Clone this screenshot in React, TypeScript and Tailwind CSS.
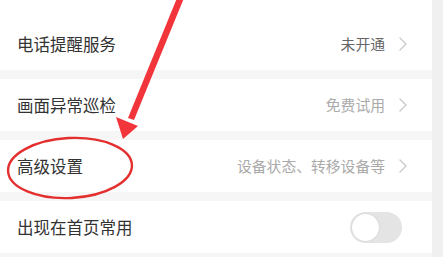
import { ChevronRight } from "lucide-react";

type Row = { title: string; value?: string; dark?: boolean; toggle?: boolean };

const rows: Row[] = [
  { title: "电话提醒服务", value: "未开通", dark: true },
  { title: "画面异常巡检", value: "免费试用" },
  { title: "高级设置", value: "设备状态、转移设备等" },
  { title: "出现在首页常用", toggle: true },
];

export default function App() {
  return (
    <div
      className="relative w-[443px] h-[257px] overflow-hidden bg-[#f0f0f0] flex"
      style={{ fontFamily: '"Noto Sans CJK SC", "Noto Sans", sans-serif' }}
    >
      <div className="w-[432px] h-full bg-[#f6f6f6] flex flex-col gap-[9px]">
        <div className="bg-white flex flex-col">
          <div className="h-[18px]" />
          <RowItem row={rows[0]} />
        </div>
        {rows.slice(1).map((r) => (
          <div key={r.title} className="bg-white">
            <RowItem row={r} />
          </div>
        ))}
      </div>

      <svg className="absolute inset-0 pointer-events-none" width="443" height="257" viewBox="0 0 443 257">
        <polygon points="177,-2 184,-2 134,120 128,118" fill="#f2353b" />
        <polygon points="123,139 116,117 138,126" fill="#f2353b" />
        <ellipse
          cx="70"
          cy="168"
          rx="62"
          ry="30"
          fill="none"
          stroke="#e3302f"
          strokeWidth="2.4"
          transform="rotate(-3 70 168)"
        />
      </svg>
    </div>
  );
}

function RowItem({ row }: { row: Row }) {
  return (
    <div className="h-[52px] flex items-center pl-[17px] pr-[17px]">
      <span className="text-[16.5px] text-[#333] leading-none">{row.title}</span>
      <div className="flex-1" />
      {row.toggle ? (
        <div className="mr-[13px] w-[52px] h-[31px] rounded-full bg-[#e4e4e4] p-[2px] flex items-center">
          <div className="w-[27px] h-[27px] rounded-full bg-white shadow-[0_0_2px_rgba(0,0,0,0.12)]" />
        </div>
      ) : (
        <>
          <span className={`text-[14.8px] leading-none ${row.dark ? "text-[#666]" : "text-[#aaa]"}`}>
            {row.value}
          </span>
          <ChevronRight className="ml-[6px] w-[24px] h-[24px] text-[#cacaca]" strokeWidth={1.4} />
        </>
      )}
    </div>
  );
}
